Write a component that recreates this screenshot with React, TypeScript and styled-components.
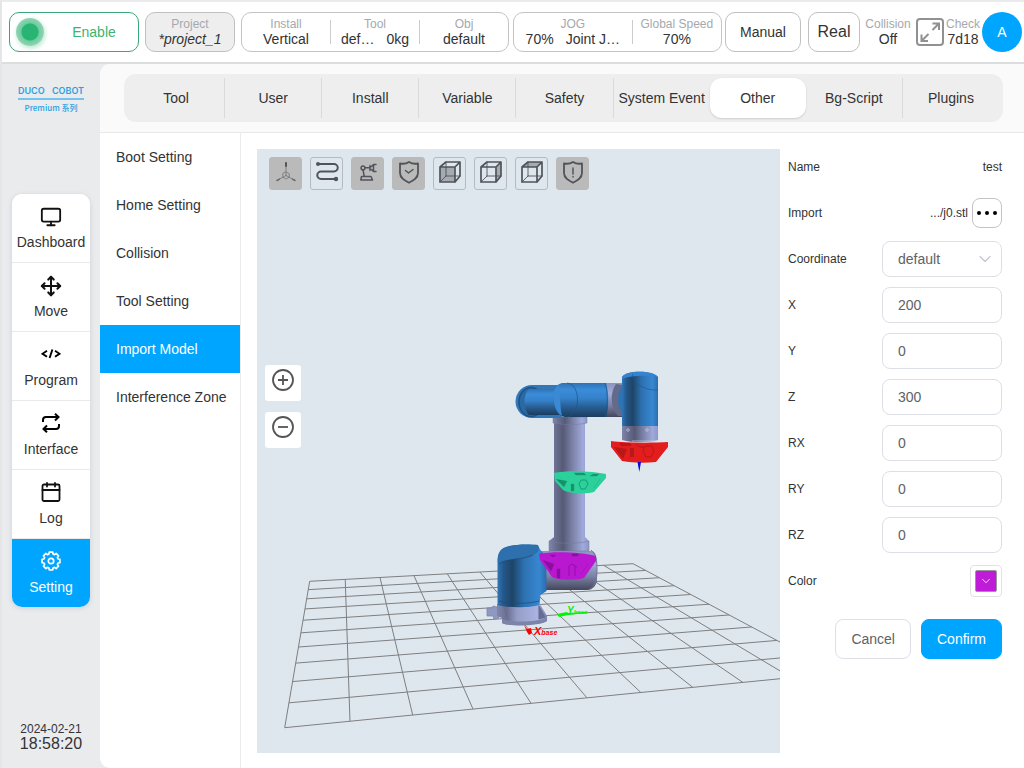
import React from 'react';
import styled, { createGlobalStyle } from 'styled-components';
import { Monitor, Move, ChevronDown } from 'lucide-react';

const blue = '#00a5ff';
const ink = '#333';

const GlobalStyle = createGlobalStyle`
  *, *::before, *::after { box-sizing: border-box; }
  body {
    margin: 0;
    font-family: "Liberation Sans", "Noto Sans CJK SC", Arial, sans-serif;
    font-size: 14px;
    line-height: 16px;
    color: ${ink};
    background: #e9ebed;
  }
  button, input, select { font: inherit; color: inherit; }
  button { padding: 0; cursor: pointer; }
  a { color: inherit; text-decoration: none; }
  svg { display: block; }
`;

/* ---------- page frame ---------- */

const Page = styled.div`
  min-height: 100vh;
  display: flex;
  flex-direction: column;
  border-left: 2px solid #e4e6e8;
  border-top: 2px solid #ebebeb;
`;

const Body = styled.div`
  flex: 1;
  display: flex;
`;

/* ---------- header ---------- */

const Header = styled.header`
  display: flex;
  align-items: center;
  gap: 4px;
  height: 62px;
  padding: 0 2px 0 7px;
  background: #fff;
  border-bottom: 2px solid #dcdddd;
`;

const Cluster = styled.div<{ $gap: number; $grow?: number; $basis?: number; $inset?: number }>`
  display: flex;
  align-items: center;
  gap: ${p => p.$gap}px;
  flex: ${p => (p.$grow ? `${p.$grow} 1 ${p.$basis}px` : '0 0 auto')};
  min-width: 0;
  padding-left: ${p => p.$inset ?? 0}px;
`;

const HeaderButton = styled.button<{ $width: number; $size?: number }>`
  flex: 0 0 ${p => p.$width}px;
  height: 40px;
  border: 1px solid #c0c0c0;
  border-radius: 10px;
  background: #fff;
  font-size: ${p => p.$size ?? 14}px;
`;

const EnableButton = styled(HeaderButton)`
  display: flex;
  align-items: center;
  padding: 0 6px;
  border-color: #3aa876;
  color: #3cb371;
`;

const EnableText = styled.span`
  flex: 1;
  padding-left: 12px;
`;

const Lamp = styled.span`
  width: 28px;
  height: 28px;
  border-radius: 50%;
  background: radial-gradient(circle, #28b472 0 8px, #6fcb9f 9px, #8fd6b4 14px);
  box-shadow: 1px 2px 5px #b9e6cf;
`;

const ProjectButton = styled(HeaderButton)`
  background: #eee;
`;

const StatGroup = styled.div`
  display: flex;
  align-items: center;
  flex: 1 1 auto;
  height: 40px;
  border: 1px solid #c4c4c4;
  border-radius: 10px;
  background: #fff;
`;

const StatBox = styled.div<{ $grow?: number; $width?: number }>`
  flex: ${p => (p.$grow ? `${p.$grow} 1 0` : '0 0 auto')};
  width: ${p => (p.$width ? `${p.$width}px` : 'auto')};
  text-align: center;
  white-space: nowrap;
`;

const StatLabel = styled.div`
  font-size: 12px;
  line-height: 14px;
  color: #a5a9ad;
`;

const StatValue = styled.div<{ $italic?: boolean }>`
  display: flex;
  justify-content: center;
  gap: 12px;
  font-style: ${p => (p.$italic ? 'italic' : 'normal')};
`;

const Rule = styled.span`
  width: 1px;
  height: 24px;
  background: #ccc;
`;

const IconButton = styled.button`
  border: 0;
  background: none;
`;

const Avatar = styled.button`
  width: 40px;
  height: 40px;
  border: 0;
  border-radius: 50%;
  background: ${blue};
  color: #fff;
  font-size: 14px;
`;

/* ---------- side bar ---------- */

const Sidebar = styled.aside`
  flex: 0 0 98px;
  display: flex;
  flex-direction: column;
  align-items: center;
  padding: 20px 0 16px;
`;

const Logo = styled.div`
  display: flex;
  flex-direction: column;
  align-items: center;
  width: 66px;
  height: 30px;
  color: #29a1e2;
  white-space: nowrap;
`;

const LogoName = styled.div`
  display: flex;
  justify-content: space-between;
  width: 100%;
  font: 600 9px/14px Inter, "Liberation Sans", sans-serif;
`;

const LogoSub = styled.div`
  width: 100%;
  border-top: 2px solid #74c3ef;
  text-align: center;
  font: 500 8px/15px "Noto Sans CJK SC", sans-serif;
`;

const Nav = styled.nav`
  width: 78px;
  margin-top: 80px;
  border-radius: 10px;
  overflow: hidden;
  background: #fff;
  box-shadow: 0 1px 5px #ccd0d4;
`;

const NavItem = styled.a<{ $active?: boolean }>`
  display: flex;
  flex-direction: column;
  align-items: center;
  gap: 8px;
  height: 69px;
  padding-top: 12px;
  border-bottom: 1px solid #e9e9e9;
  background: ${p => (p.$active ? blue : '#fff')};
  color: ${p => (p.$active ? '#fff' : ink)};

  &:last-child {
    height: 68px;
    border-bottom: 0;
  }
  svg { color: ${p => (p.$active ? '#fff' : '#111')}; }
`;

const NavIcon = styled.span`
  display: grid;
  place-items: center;
  height: 20px;
`;

const Clock = styled.div`
  margin-top: auto;
  text-align: center;
  font-size: 16px;
`;

const ClockDate = styled.div`
  font-size: 12px;
  line-height: 14px;
`;

/* ---------- content ---------- */

const Content = styled.main`
  flex: 1;
  min-width: 0;
  display: flex;
  flex-direction: column;
  border-radius: 10px 0 0 10px;
  overflow: hidden;
  background: #fff;
`;

const TabBar = styled.div`
  padding: 10px 21px 10px 24px;
  background: #fafafa;
  border-bottom: 1px solid #e8e8e8;
`;

const Tabs = styled.div`
  display: flex;
  padding: 4px;
  border-radius: 12px;
  background: #eee;
`;

const Tab = styled.button<{ $active?: boolean; $line?: boolean }>`
  flex: 1 1 0;
  height: 40px;
  border: 0;
  border-right: ${p => (p.$line ? '1px solid #dadada' : '0')};
  border-radius: ${p => (p.$active ? '12px' : '0')};
  background: ${p => (p.$active ? '#fff' : 'transparent')};
  box-shadow: ${p => (p.$active ? '0 1px 2px #ccc' : 'none')};
  white-space: nowrap;
`;

const Workspace = styled.div`
  flex: 1;
  display: flex;
`;

const Menu = styled.nav`
  flex: 0 0 141px;
  border-right: 1px solid #ebebeb;
`;

const MenuItem = styled.a<{ $active?: boolean }>`
  display: block;
  padding-left: 16px;
  line-height: 48px;
  background: ${p => (p.$active ? blue : 'transparent')};
  color: ${p => (p.$active ? '#fff' : ink)};
`;

/* ---------- 3D stage ---------- */

const Stage = styled.section`
  flex: 1;
  min-width: 0;
  display: grid;
  margin: 16px 0 15px 16px;
  background: #dfe7ee;
`;

const Scene = styled.svg`
  grid-area: 1 / 1;
  width: 100%;
  height: 100%;
  min-height: 0;
`;

const Overlay = styled.div`
  grid-area: 1 / 1;
  z-index: 1;
  padding: 8px;
`;

const Toolbar = styled.div`
  display: flex;
  gap: 8px;
  padding-left: 4px;
`;

const ToolButton = styled.button<{ $on?: boolean }>`
  display: grid;
  place-items: center;
  width: 33px;
  height: 33px;
  padding-bottom: 3px;
  border: 1px solid ${p => (p.$on ? '#bababa' : '#b4babf')};
  border-radius: 3px;
  background: ${p => (p.$on ? '#bababa' : 'transparent')};
`;

const ZoomStack = styled.div`
  display: flex;
  flex-direction: column;
  gap: 11px;
  width: 36px;
  margin-top: 175px;
`;

const ZoomButton = styled.button`
  display: grid;
  justify-items: center;
  align-items: start;
  height: 36px;
  padding-top: 3px;
  border: 0;
  border-radius: 3px;
  background: #fff;
`;

/* ---------- form ---------- */

const Form = styled.form`
  flex: 0 0 244px;
  padding: 11px 22px 0 8px;
`;

const Row = styled.div`
  display: flex;
  align-items: center;
  justify-content: space-between;
  height: 46px;
  font-size: 12px;
`;

const FileBox = styled.span`
  display: flex;
  align-items: center;
  gap: 4px;
`;

const MoreButton = styled.button`
  display: grid;
  place-items: center;
  width: 30px;
  height: 30px;
  border: 1px solid #c4c4c4;
  border-radius: 8px;
  background: #fff;
`;

const Field = styled.input`
  width: 120px;
  height: 36px;
  padding: 0 15px;
  border: 1px solid #dcdfe6;
  border-radius: 8px;
  background: #fff;
  color: #606266;
  font-size: 14px;
  outline: none;
`;

const SelectBox = styled.span`
  display: grid;
  align-items: center;
  justify-items: end;

  select, svg { grid-area: 1 / 1; }
  select { appearance: none; }
  svg { margin-right: 7px; pointer-events: none; color: #c0c4cc; }
`;

const ColorButton = styled.button`
  display: grid;
  place-items: center;
  width: 32px;
  height: 32px;
  border: 1px solid #e2e2e6;
  border-radius: 4px;
  background: #fff;
`;

const Swatch = styled.span`
  display: grid;
  place-items: center;
  width: 22px;
  height: 22px;
  border: 1px solid #999;
  border-radius: 2px;
  background: #bf1bd9;
  color: #fff;
`;

const Actions = styled.div`
  display: flex;
  justify-content: flex-end;
  gap: 10px;
  margin-top: 15px;
`;

const ActionButton = styled.button<{ $primary?: boolean }>`
  height: 40px;
  padding: 0 15px;
  border: 1px solid ${p => (p.$primary ? blue : '#dcdfe6')};
  border-radius: 8px;
  background: ${p => (p.$primary ? blue : '#fff')};
  color: ${p => (p.$primary ? '#fff' : '#606266')};
`;

/* ---------- header parts ---------- */

function Stat(props: { label: string; values: string[]; italic?: boolean; grow?: number; width?: number }) {
  return (
    <StatBox $grow={props.grow} $width={props.width}>
      <StatLabel>{props.label}</StatLabel>
      <StatValue $italic={props.italic}>
        {props.values.map(v => <span key={v}>{v}</span>)}
      </StatValue>
    </StatBox>
  );
}

function ExpandIcon() {
  return (
    <svg width="28" height="28" viewBox="0 0 28 28" fill="none" stroke="#919191" strokeWidth="2">
      <rect x="1" y="1" width="26" height="26" rx="3" />
      <path d="M16.500 5.500H23V12M23 5.500l-6.500 6.500M5.500 16.500V23H12M5.500 23l7-7" />
    </svg>
  );
}

/* ---------- side bar icons ---------- */

const CalendarIcon = () => (
  <svg width="20" height="20" viewBox="0 0 20 20" fill="none" stroke="currentColor" strokeWidth="1.800" strokeLinecap="round">
    <rect x="1.500" y="2.500" width="17" height="16.500" rx="1.500" />
    <path d="M1.500 8h17M6 1v3.500M14 1v3.500" />
  </svg>
);

const CodeIcon = () => (
  <svg width="20" height="20" viewBox="0 0 20 20" fill="none" stroke="#000" strokeWidth="1.900">
    <path d="M6 6.800L1.500 9.800 6 12.800M14 6.800l4.500 3-4.500 3M11.400 5.500L8.600 14" />
  </svg>
);

const RepeatIcon = () => (
  <svg width="20" height="20" viewBox="0 0 20 20" fill="none" stroke="#000" strokeWidth="2">
    <path d="M2 9V7a3 3 0 0 1 3-3h12M14 .8L17.500 4 14 7.500M18 11v2a3 3 0 0 1-3 3H3M6 12.500L2.500 16 6 19.300" />
  </svg>
);

/* Outline of an eight-toothed wheel around (10, 10). */
const gearOutline = Array.from({ length: 8 }, (_, i) => i * 45)
  .flatMap(a => [[a - 11, 9.1], [a + 11, 9.1], [a + 16, 7.3], [a + 29, 7.3]])
  .map(([deg, r]) => {
    const t = (deg * Math.PI) / 180;
    return `${(10 + r * Math.sin(t)).toFixed(2)} ${(10 - r * Math.cos(t)).toFixed(2)}`;
  })
  .join('L');

const GearIcon = () => (
  <svg width="20" height="20" viewBox="0 0 20 20" fill="none" stroke="currentColor" strokeWidth="1.700" strokeLinejoin="round">
    <circle cx="10" cy="10" r="2.700" />
    <path d={`M${gearOutline}Z`} />
  </svg>
);

/* ---------- toolbar icons ---------- */

const iconStroke = { fill: 'none', stroke: '#50545a', strokeWidth: 1.4, strokeLinejoin: 'round' as const, strokeLinecap: 'round' as const };

const AxesIcon = () => (
  <svg width="24" height="24" viewBox="0 0 24 24" {...iconStroke} stroke="#6c6c6c" strokeWidth="0.7">
    <path d="M12 15.500V3M12 15.500L3 20.500M12 15.500l9 5" />
    <path d="M12 3v3" strokeWidth="2" stroke="#555" />
    <path d="M3 20.500l2.500-1.400M21 20.500l-2.500-1.400" strokeWidth="1.500" />
    <path d="M12 12l3.200 1.700v3.500L12 19l-3.200-1.800v-3.500z" />
  </svg>
);

const PathIcon = () => (
  <svg width="24" height="24" viewBox="0 0 24 24" {...iconStroke} strokeWidth="2">
    <path d="M3 4h16a3.700 3.700 0 0 1 0 7.500H6a3.700 3.700 0 0 0 0 7.500h15" />
    <circle cx="3" cy="4" r="2" fill="#50545a" stroke="none" />
    <circle cx="21" cy="19" r="2.200" fill="#50545a" stroke="none" />
  </svg>
);

const ArmIcon = () => (
  <svg width="24" height="24" viewBox="0 0 24 24" {...iconStroke} strokeWidth="1.500">
    <circle cx="7" cy="8" r="1.900" />
    <path d="M9 7.800h5M7 10l1.200 6M5.500 16.500h9.500l1.500 3.500H4.800z" />
    <path d="M14 5.500v5M15.500 6.500l2-2h2.500M15.500 9.500l2 2h2.500M17.500 4.500v7" />
  </svg>
);

const ShieldIcon = ({ mark }: { mark: string }) => (
  <svg width="24" height="26" viewBox="0 0 24 26" {...iconStroke} strokeWidth="1.800">
    <path d="M12 3C9 5 6 5 3 4.500v9.500c0 5 4.500 7.500 9 9.800 4.500-2.300 9-4.800 9-9.800V4.500C18 5 15 5 12 3z" />
    <path d={mark} strokeWidth="1.500" />
  </svg>
);

const CubeIcon = ({ face }: { face: string }) => (
  <svg width="24" height="24" viewBox="0 0 24 24" {...iconStroke} strokeWidth="1">
    <path d={face} fill="#a5abb0" stroke="none" />
    <path d="M2 22l6-6M8 2v14M8 16h14" strokeWidth="0.9" />
    <path d="M2 7h15v15H2zM2 7l6-5h14l-5 5M22 2v14l-5 6" strokeWidth="1.700" />
  </svg>
);

/* ---------- robot scene ---------- */

type Point = [number, number];

const floor: Point[] = [[309.7, 581.3], [633, 563.7], [838, 673], [284.7, 727.7]];

/* Maps the unit square onto the floor quad with perspective. */
function project(u: number, v: number): Point {
  const [[x0, y0], [x1, y1], [x2, y2], [x3, y3]] = floor;
  const dx1 = x1 - x2, dx2 = x3 - x2, dx3 = x0 - x1 + x2 - x3;
  const dy1 = y1 - y2, dy2 = y3 - y2, dy3 = y0 - y1 + y2 - y3;
  const det = dx1 * dy2 - dx2 * dy1;
  const g = (dx3 * dy2 - dx2 * dy3) / det;
  const h = (dx1 * dy3 - dx3 * dy1) / det;
  const w = g * u + h * v + 1;
  return [
    ((x1 - x0 + g * x1) * u + (x3 - x0 + h * x3) * v + x0) / w,
    ((y1 - y0 + g * y1) * u + (y3 - y0 + h * y3) * v + y0) / w,
  ];
}

function Floor() {
  const steps = Array.from({ length: 11 }, (_, i) => i / 10);
  const d = steps
    .map(s => `M${project(s, 0)}L${project(s, 1)}M${project(0, s)}L${project(1, s)}`)
    .join('');
  return <path d={d} fill="none" stroke="#7e7f80" strokeWidth="1" />;
}

function Gradient(props: { id: string; vertical?: boolean; stops: [number, string][] }) {
  return (
    <linearGradient id={props.id} x1="0" y1="0" x2={props.vertical ? 0 : 1} y2={props.vertical ? 1 : 0}>
      {props.stops.map(([o, c]) => <stop key={o} offset={o} stopColor={c} />)}
    </linearGradient>
  );
}

function RobotScene() {
  return (
    <Scene viewBox="257 149 523 604" preserveAspectRatio="xMidYMid slice" role="img" aria-label="Robot model">
      <defs>
        <Gradient id="column" stops={[[0, '#8086ab'], [0.18, '#686d8d'], [0.35, '#565a76'], [0.6, '#7d84aa'], [0.85, '#a0aadb'], [1, '#8e97c4']]} />
        <Gradient id="upright" stops={[[0, '#2f76b8'], [0.12, '#24588a'], [0.3, '#1f4468'], [0.55, '#2d72b2'], [0.85, '#3787d1'], [1, '#2b6dac']]} />
        <Gradient id="lying" vertical stops={[[0, '#3173b2'], [0.2, '#3a8cda'], [0.45, '#3581ca'], [0.7, '#285e93'], [1, '#1c3d5e']]} />
        <Gradient id="pipe" vertical stops={[[0, '#8c93bb'], [0.3, '#a3add9'], [0.65, '#7c82a5'], [1, '#43465c']]} />
        <Gradient id="foot" stops={[[0, '#8087ac'], [0.2, '#6b7091'], [0.4, '#949dc6'], [0.8, '#aab4e2'], [1, '#7c83a8']]} />
      </defs>

      <Floor />

      {/* lower arm and its joint */}
      <path d="M541 551h50c7 0 6 12 6 18v10c0 6-4 11-10 11h-41z" fill="url(#pipe)" />
      <path d="M591 550c5 4 6 10 6 20s-2 16-7 19" fill="none" stroke="#70779c" strokeWidth="1" />
      <path d="M554 418h31v119l4 4v9h-40v-9l5-4z" fill="url(#column)" />
      <path d="M553 417h34v6c-10 2-24 2-34 0z" fill="url(#column)" stroke="#737a9e" strokeWidth="0.5" />
      <path d="M549 541c10 3 30 3 40 0v10h-40z" fill="url(#column)" stroke="#737a9e" strokeWidth="0.5" />

      {/* base */}
      <path d="M497 607l-4-1-1 2h-5v8h6l1 3 5-1z" fill="#8f98c0" stroke="#7d85ab" strokeWidth="0.8" />
      <path d="M497 604h43l7 12v5c-6 4-38 6-45 2v-5l-5-2z" fill="url(#foot)" />
      <path d="M502 619c10 4 35 3 45-1v3c-6 5-38 6-45 2z" fill="#7d84a9" />
      <path d="M504 607l3 10M539 606l6 11-6 2z" fill="#666d90" stroke="#666d90" strokeWidth="1" />
      <path d="M497.500 562c0-6 1-11 6-14 8-4 25-4 34-3l3 5 6 7v34l-6 4-1 10c-10 3-32 3-42 0z" fill="url(#upright)" />
      <path d="M498 563c-1-8 2-13 6-15 9-4 25-4 34-3 2 4 1 7-5 10-10 5-26 3-35 8z" fill="#2e70ae" />
      <path d="M499 564c8-6 24-4 34-9M499 601c11 3 30 3 40 0" fill="none" stroke="#1e4b78" strokeWidth="0.7" />

      {/* upper arm */}
      <path d="M604 383h20v34h-20z" fill="url(#pipe)" />
      <path d="M616 384c-6 8-6 24 2 32h5v-31z" fill="#646a89" />
      <path d="M532 385h30v33h-30a16.500 16.500 0 0 1 0-33z" fill="#3277b8" />
      <ellipse cx="531" cy="402" rx="12" ry="14.500" fill="#2c69a3" stroke="#1e5388" strokeWidth="1.500" />
      <path d="M529 389h30v26h-30c-6-5-6-21 0-26z" fill="url(#lying)" />
      <path d="M562 383h44c3 8 3 26 0 34h-41c-6-1-12-6-12-17s3-15 9-17z" fill="url(#lying)" />
      <path d="M559 384c-8 7-7 26 3 32-2-9-2-25-3-32z" fill="#3989d4" />
      <path d="M567 383c14 1 14 32 0 34M605 383c3 8 3 26 0 34" fill="none" stroke="#1e5388" strokeWidth="0.7" />
      <path d="M623 386c-6 4-7 22 0 27z" fill="#2f73b4" />
      <path d="M622 377c4-7 31-7 36 0v50h-36z" fill="url(#upright)" />
      <path d="M622 377c4-7 31-7 36 0-8-2-28-2-36 2z" fill="#3584cf" />
      <path d="M633 374c-3 5 8 17 25 16" fill="none" stroke="#205a93" strokeWidth="0.7" />
      <path d="M622 426h36v14c-9 3-26 3-36 0z" fill="url(#column)" />
      <g fill="none" stroke="#c4cbe6" strokeWidth="0.7">
        <circle cx="628" cy="430" r="1.300" />
        <circle cx="647" cy="430" r="1.300" />
        <path d="M632 441h24" />
      </g>

      {/* imported flange models */}
      <path d="M611 441c14 2 43 2 57 1v5l-12 15c-11 1-23 1-34-1l-11-14z" fill="#e31d1d" />
      <path d="M614 447l9 12 4-10M630 448h4v9h-4zM658 447l-5 11M619 443h12v3h-10z" fill="#b31616" opacity="0.85" />
      <path d="M645 446h7l2 5-3 6h-5l-3-6zM636 444l4 3h4" fill="none" stroke="#b81515" strokeWidth="0.9" />
      <path d="M637.500 462h3.500l-1.700 10z" fill="#0909d8" />

      <path d="M554 473c12-3 40-2 52 1v4l-12 14c-6 2-25 2-31-2l-8-9z" fill="#2bd09b" />
      <path d="M556 479l8 8 3-6M571 484h3v7h-3zM600 479l-6 9M574 473h10l2 2h-10zM593 474h6l-2 2h-7z" fill="#17906a" stroke="#1aa578" strokeWidth="0.4" />
      <path d="M581 480h5l2 4-3 5h-4l-2-5z" fill="none" stroke="#159a70" strokeWidth="0.9" />

      <path d="M539 554c12-3 44-2 57 2v5l-12 17c-6 2-25 3-32-1l-12-17z" fill="#b917d0" />
      <path d="M543 560l8 11 3-7M557 569h3v9h-3zM588 564l-7 10M550 555h6l-3 2zM572 554h6v2h-6z" fill="#8a0f9e" stroke="#8f10a3" strokeWidth="0.4" />
      <path d="M569 566l3-2 5 3M569 566v10M575 566v10" fill="none" stroke="#8f10a3" strokeWidth="0.9" />

      {/* base axes */}
      <path d="M524 625l3 4 4-1 1 5-3 2-2-3z" fill="#fd0000" />
      <g fontFamily="Liberation Sans" fontStyle="italic" fontWeight="700">
        <text x="534" y="635" fontSize="11" fill="#fd0000">X<tspan fontSize="7">base</tspan></text>
        <text x="567" y="614" fontSize="10" fill="#00f500">Y<tspan fontSize="6">base</tspan></text>
      </g>
      <path d="M557 614l10-2 1 1 19-1v1l-19 2-9 2z" fill="#00f500" />
    </Scene>
  );
}

/* ---------- app ---------- */

const tabs = ['Tool', 'User', 'Install', 'Variable', 'Safety', 'System Event', 'Other', 'Bg-Script', 'Plugins'];
const noLine = ['System Event', 'Other', 'Plugins'];
const menu = ['Boot Setting', 'Home Setting', 'Collision', 'Tool Setting', 'Import Model', 'Interference Zone'];

const nav: { label: string; icon: React.ReactNode }[] = [
  { label: 'Dashboard', icon: <Monitor size={22} strokeWidth={2} /> },
  { label: 'Move', icon: <Move size={22} strokeWidth={2.2} /> },
  { label: 'Program', icon: <CodeIcon /> },
  { label: 'Interface', icon: <RepeatIcon /> },
  { label: 'Log', icon: <CalendarIcon /> },
  { label: 'Setting', icon: <GearIcon /> },
];

const tools: { label: string; on?: boolean; icon: React.ReactNode }[] = [
  { label: 'Axes', on: true, icon: <AxesIcon /> },
  { label: 'Path', icon: <PathIcon /> },
  { label: 'Robot arm', on: true, icon: <ArmIcon /> },
  { label: 'Safety', on: true, icon: <ShieldIcon mark="M8.500 11.500l3 2.500L16 10.500" /> },
  { label: 'Front view', icon: <CubeIcon face="M2 7h15v15H2z" /> },
  { label: 'Side view', icon: <CubeIcon face="M17 7l5-5v14l-5 6z" /> },
  { label: 'Top view', icon: <CubeIcon face="M2 7l6-5h14l-5 5z" /> },
  { label: 'Warnings', on: true, icon: <ShieldIcon mark="M12 9v6M12 17.500v.5" /> },
];

const fields = [['X', '200'], ['Y', '0'], ['Z', '300'], ['RX', '0'], ['RY', '0'], ['RZ', '0']];

export default function App() {
  return (
    <>
      <GlobalStyle />
      <Page>
        <Header>
          <Cluster $gap={6} $grow={5} $basis={500}>
            <EnableButton $width={130}><Lamp /><EnableText>Enable</EnableText></EnableButton>
            <ProjectButton $width={90}>
              <Stat label="Project" values={['*project_1']} italic />
            </ProjectButton>
            <StatGroup>
              <Stat grow={1} label="Install" values={['Vertical']} />
              <Rule />
              <Stat grow={1} label="Tool" values={['def…', '0kg']} />
              <Rule />
              <Stat grow={1} label="Obj" values={['default']} />
            </StatGroup>
          </Cluster>
          <Cluster $gap={3} $grow={3} $basis={288}>
            <StatGroup>
              <Stat grow={4} label="JOG" values={['70%', 'Joint J…']} />
              <Rule />
              <Stat grow={3} label="Global Speed" values={['70%']} />
            </StatGroup>
            <HeaderButton $width={76}>Manual</HeaderButton>
          </Cluster>
          <Cluster $gap={5} $inset={3}>
            <HeaderButton $width={52} $size={16}>Real</HeaderButton>
            <Stat width={46} label="Collision" values={['Off']} />
            <Cluster $gap={2}>
              <IconButton aria-label="Full screen"><ExpandIcon /></IconButton>
              <Stat width={34} label="Check" values={['7d18']} />
              <Avatar>A</Avatar>
            </Cluster>
          </Cluster>
        </Header>

        <Body>
          <Sidebar>
            <Logo>
              <LogoName><span>DUCO</span><span>COBOT</span></LogoName>
              <LogoSub>Premium 系列</LogoSub>
            </Logo>
            <Nav>
              {nav.map(n => (
                <NavItem key={n.label} href="#" $active={n.label === 'Setting'}>
                  <NavIcon>{n.icon}</NavIcon>
                  {n.label}
                </NavItem>
              ))}
            </Nav>
            <Clock>
              <ClockDate>2024-02-21</ClockDate>
              18:58:20
            </Clock>
          </Sidebar>

          <Content>
            <TabBar>
              <Tabs>
                {tabs.map(t => (
                  <Tab key={t} $active={t === 'Other'} $line={!noLine.includes(t)}>{t}</Tab>
                ))}
              </Tabs>
            </TabBar>
            <Workspace>
              <Menu>
                {menu.map(m => (
                  <MenuItem key={m} href="#" $active={m === 'Import Model'}>{m}</MenuItem>
                ))}
              </Menu>

              <Stage>
                <RobotScene />
                <Overlay>
                  <Toolbar>
                    {tools.map(t => (
                      <ToolButton key={t.label} aria-label={t.label} $on={t.on}>{t.icon}</ToolButton>
                    ))}
                  </Toolbar>
                  <ZoomStack>
                    {['M7 12h10M12 7v10', 'M7 12h10'].map((d, i) => (
                      <ZoomButton key={d} aria-label={i ? 'Zoom out' : 'Zoom in'}>
                        <svg width="24" height="24" viewBox="0 0 24 24" fill="none" stroke="#555" strokeWidth="1.800">
                          <circle cx="12" cy="12" r="10" />
                          <path d={d} />
                        </svg>
                      </ZoomButton>
                    ))}
                  </ZoomStack>
                </Overlay>
              </Stage>

              <Form onSubmit={e => e.preventDefault()}>
                <Row><span>Name</span><span>test</span></Row>
                <Row>
                  <span>Import</span>
                  <FileBox>
                    .../j0.stl
                    <MoreButton type="button" aria-label="Choose file">
                      <svg width="20" height="4" viewBox="0 0 20 4">
                        <circle cx="2" cy="2" r="2" /><circle cx="10" cy="2" r="2" /><circle cx="18" cy="2" r="2" />
                      </svg>
                    </MoreButton>
                  </FileBox>
                </Row>
                <Row>
                  <label htmlFor="coordinate">Coordinate</label>
                  <SelectBox>
                    <Field as="select" id="coordinate"><option>default</option></Field>
                    <ChevronDown size={20} strokeWidth={1.3} />
                  </SelectBox>
                </Row>
                {fields.map(([name, value]) => (
                  <Row key={name}>
                    <label htmlFor={name}>{name}</label>
                    <Field id={name} defaultValue={value} />
                  </Row>
                ))}
                <Row>
                  <span>Color</span>
                  <ColorButton type="button" aria-label="Color">
                    <Swatch><ChevronDown size={14} strokeWidth={1.4} /></Swatch>
                  </ColorButton>
                </Row>
                <Actions>
                  <ActionButton type="button">Cancel</ActionButton>
                  <ActionButton type="submit" $primary>Confirm</ActionButton>
                </Actions>
              </Form>
            </Workspace>
          </Content>
        </Body>
      </Page>
    </>
  );
}
